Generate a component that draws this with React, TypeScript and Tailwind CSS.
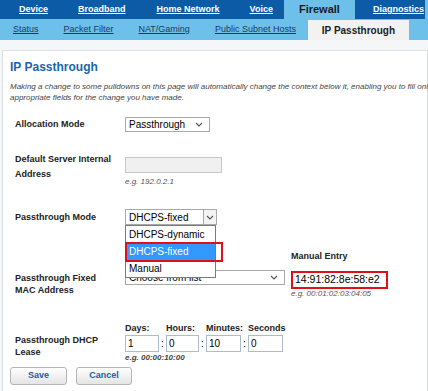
const Chevron = () => (
  <svg width="8" height="5" viewBox="0 0 8 5" className="shrink-0">
    <path d="M1 1 L4 4 L7 1" fill="none" stroke="#555" strokeWidth="1.1" />
  </svg>
);

function Select({ value, width }: { value: string; width: string }) {
  return (
    <div
      className={`flex h-[15px] items-center justify-between border border-[#a9a9a9] bg-white pl-[3px] pr-[6px] text-[10px] text-black ${width}`}
    >
      <span className="leading-none">{value}</span>
      <Chevron />
    </div>
  );
}

export default function App() {
  const topNav = [
    { label: "Device", ml: "ml-[19px]" },
    { label: "Broadband", ml: "ml-[30px]" },
    { label: "Home Network", ml: "ml-[31px]" },
    { label: "Voice", ml: "ml-[30px]" },
  ];
  const subNav = [
    { label: "Status", ml: "ml-[13px]" },
    { label: "Packet Filter", ml: "ml-[25px]" },
    { label: "NAT/Gaming", ml: "ml-[25px]" },
    { label: "Public Subnet Hosts", ml: "ml-[25px]" },
  ];
  const lease = [
    { label: "Days:", value: "1", w: "w-[34px]", colon: true },
    { label: "Hours:", value: "0", w: "w-[33px]", colon: true },
    { label: "Minutes:", value: "10", w: "w-[35px]", colon: true },
    { label: "Seconds", value: "0", w: "w-[35px]", colon: false },
  ];

  return (
    <div className="relative h-[391px] w-[428px] overflow-hidden bg-[#f4f6f8] font-['Liberation_Sans',Arial,sans-serif]">
      {/* top nav */}
      <div className="flex h-[19px] items-stretch bg-[#0c5ba6]">
        {topNav.map((n) => (
          <div key={n.label} className={`flex items-center ${n.ml}`}>
            <span className="text-[9px] font-bold text-white underline">{n.label}</span>
          </div>
        ))}
        <div className="ml-[11px] flex w-[71px] items-center justify-center bg-[#6dc0ea]">
          <span className="text-[11px] font-bold text-[#1c1c1c]">Firewall</span>
        </div>
        <div className="ml-[18px] flex items-center">
          <span className="text-[9px] font-bold text-white underline">Diagnostics</span>
        </div>
        <div className="ml-auto w-[3px] bg-[#6dc0ea]" />
      </div>

      {/* sub nav */}
      <div className="flex h-[21px] items-stretch bg-[#6dc0ea]">
        {subNav.map((n) => (
          <div key={n.label} className={`flex items-center ${n.ml}`}>
            <span className="text-[9px] text-[#1b3a63] underline">{n.label}</span>
          </div>
        ))}
        <div className="ml-[12px] mt-[1px] flex w-[101px] items-center justify-center bg-[#f2f2f2]">
          <span className="text-[10px] font-bold text-[#1c1c1c]">IP Passthrough</span>
        </div>
      </div>

      {/* panel */}
      <div className="ml-[2px] mt-[10px] h-[400px] border border-[#dcdfe2] bg-white">
        <h1 className="ml-[7px] mt-[7px] text-[12px] font-bold leading-[18px] text-[#1b63ad]">
          IP Passthrough
        </h1>
        <p className="ml-[7px] mt-[5px] whitespace-nowrap text-[8px] italic leading-[11px] text-[#444]">
          Making a change to some pulldowns on this page will automatically change the context below it, enabling you to fill only the
          <br />
          appropriate fields for the change you have made.
        </p>

        <div className="pl-[12px] text-[9px] text-[#222]">
          {/* allocation mode */}
          <div className="mt-[13px] flex h-[16px]">
            <div className="w-[110px] font-bold leading-[16px]">Allocation Mode</div>
            <div className="mt-[1px]">
              <Select value="Passthrough" width="w-[85px]" />
            </div>
          </div>

          {/* default server */}
          <div className="mt-[20px] flex">
            <div className="w-[110px] font-bold leading-[15px]">
              Default Server Internal
              <br />
              Address
            </div>
            <div className="mt-[5px]">
              <div className="h-[16px] w-[97px] border border-[#c8c8c8] bg-[#f0f0f0]" />
              <div className="mt-[4px] text-[8px] italic leading-[10px] text-[#555]">e.g. 192.0.2.1</div>
            </div>
          </div>

          {/* passthrough mode */}
          <div className="mt-[22px] flex h-[16px]">
            <div className="w-[110px] font-bold leading-[16px]">Passthrough Mode</div>
            <div className="relative z-10">
              <div className="flex h-[16px] w-[92px] items-stretch border border-[#a9a9a9] bg-white text-[10px] text-black">
                <span className="flex flex-1 items-center pl-[3px]">DHCPS-fixed</span>
                <span className="flex w-[13px] items-center justify-center border-l border-[#a9a9a9] bg-[#f3f3f3]">
                  <Chevron />
                </span>
              </div>
              <div className="absolute left-0 top-[16px] w-[91px] border border-[#7a7a7a] bg-white text-[10px] text-black">
                <div className="flex h-[17px] items-center pl-[3px]">DHCPS-dynamic</div>
                <div className="flex h-[17px] items-center bg-[#3399ff] pl-[3px] text-white">DHCPS-fixed</div>
                <div className="flex h-[17px] items-center pl-[3px]">Manual</div>
                <div className="absolute left-[-1px] top-[16px] h-[20px] w-[98px] border-2 border-[#e0101a]" />
              </div>
            </div>
          </div>

          {/* MAC address */}
          <div className="mt-[25px] flex">
            <div className="mt-[22px] w-[110px] font-bold leading-[12px]">
              Passthrough Fixed
              <br />
              MAC Address
            </div>
            <div className="mt-[20px]">
              <Select value="Choose from list" width="w-[160px]" />
            </div>
            <div className="ml-[6px]">
              <div className="font-bold leading-[12px]">Manual Entry</div>
              <div className="mt-[9px] flex h-[18px] w-[97px] items-center border-2 border-[#e0101a] pl-[2px] text-[10.5px] text-black">
                14:91:82:8e:58:e2
              </div>
              <div className="text-[8px] italic leading-[10px] text-[#555]">e.g. 00:01:02:03:04:05</div>
            </div>
          </div>

          {/* lease */}
          <div className="mt-[23px] flex">
            <div className="mt-[12px] w-[110px] font-bold leading-[12px]">
              Passthrough DHCP
              <br />
              Lease
            </div>
            <div>
              <div className="flex">
                {lease.map((f) => (
                  <div key={f.label} className="flex flex-col">
                    <div className="font-bold leading-[12px] text-[#222]">{f.label}</div>
                    <div className="mt-[1px] flex">
                      <div
                        className={`flex h-[17px] items-center border border-[#a9bcd0] pl-[2px] text-[10px] text-black ${f.w}`}
                      >
                        {f.value}
                      </div>
                      {f.colon && (
                        <span className="flex w-[7px] items-center justify-center text-[10px] text-black">:</span>
                      )}
                    </div>
                  </div>
                ))}
              </div>
              <div className="mt-[1px] text-[8px] font-bold italic leading-[10px] text-[#444]">e.g. 00:00:10:00</div>
            </div>
          </div>
        </div>

        {/* buttons */}
        <div className="ml-[7px] mt-[4px] flex gap-[9px]">
          <button className="h-[18px] w-[57px] rounded-[3px] border border-[#b5b5b5] bg-gradient-to-b from-white to-[#e4e4e4] text-[9px] font-bold text-[#1b5ba6]">
            Save
          </button>
          <button className="h-[18px] w-[56px] rounded-[3px] border border-[#b5b5b5] bg-gradient-to-b from-white to-[#e4e4e4] text-[9px] font-bold text-[#1b5ba6]">
            Cancel
          </button>
        </div>
      </div>
    </div>
  );
}
